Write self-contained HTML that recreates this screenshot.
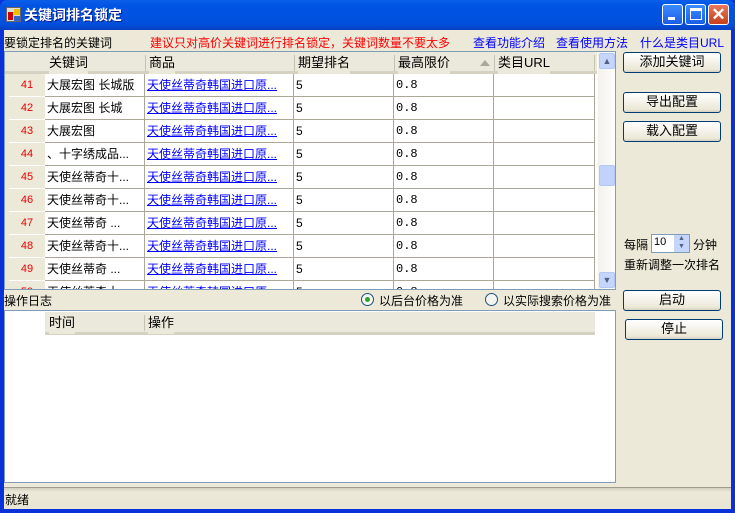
<!DOCTYPE html><html><head><meta charset="utf-8"><style>
*{box-sizing:border-box;margin:0;padding:0}
body{width:735px;height:513px;overflow:hidden;background:#0831d9;font-family:"Liberation Sans","Noto Sans CJK SC",sans-serif;font-size:12px;position:relative}
.a{position:absolute}
#title{left:0;top:0;width:735px;height:30px;background:linear-gradient(#0a5fe8,#0054e3 20%,#0050dd 80%,#0a3fc0);border-radius:7px 7px 0 0}
#client{left:4px;top:30px;width:727px;height:479px;background:#ece9d8}
.tb{top:4px;width:21px;height:21px;border:1px solid #fff;border-radius:3px;background:linear-gradient(#3c8cff,#1a5de6)}
.btn{position:absolute;border:1px solid #003c74;border-radius:3px;background:linear-gradient(#fff,#ece9d8 85%,#d6d0c0);text-align:center;font-size:13px;line-height:18px;color:#000}
.grid{position:absolute;background:#fff;border:1px solid #7f9db9}
.hdr{position:absolute;background:#ebe9db;font-size:13px;height:22px;line-height:22px}
.cell{position:absolute;height:23px;line-height:22px;border-right:1px solid #aca899;border-bottom:1px solid #aca899;font-size:12px;padding-left:2px;white-space:nowrap;overflow:hidden}
.rh{position:absolute;height:23px;line-height:22px;width:36px;text-align:center;color:#e00;background:#ece9d8;font-size:11px;border-bottom:1px solid #fff}
a{color:#00f;text-decoration:underline}
</style></head><body>
<div id="title" class="a"></div>
<div class="a" style="left:6px;top:7px;width:15px;height:15px;background:#ddd;border:1px solid #666"><div class="a" style="left:1px;top:4px;width:5px;height:8px;background:#c00"></div><div class="a" style="left:7px;top:1px;width:6px;height:6px;background:#f0c000"></div><div class="a" style="left:7px;top:8px;width:6px;height:5px;background:#36c"></div></div>
<div class="a" style="left:24px;top:5px;color:#fff;font-weight:bold;font-size:14px;text-shadow:1px 1px #0a1e8a">关键词排名锁定</div>
<div class="a tb" style="left:662px"><div class="a" style="left:5px;top:12px;width:7px;height:3px;background:#fff"></div></div>
<div class="a tb" style="left:685px"><div class="a" style="left:4px;top:3px;width:12px;height:12px;border:1px solid #fff;border-top-width:3px"></div></div>
<div class="a tb" style="left:708px;background:linear-gradient(#e8785a,#c8401a);color:#fff;font-size:17px;font-weight:bold;text-align:center;line-height:19px">✕</div>
<div id="client" class="a"></div>
<div class="a" style="left:4px;top:34px;font-size:12px">要锁定排名的关键词</div>
<div class="a" style="left:150px;top:34px;color:#f00">建议只对高价关键词进行排名锁定，关键词数量不要太多</div>
<div class="a" style="left:473px;top:34px;color:#00f">查看功能介绍</div>
<div class="a" style="left:556px;top:34px;color:#00f">查看使用方法</div>
<div class="a" style="left:640px;top:34px;color:#00f">什么是类目URL</div>

<div class="grid" style="left:4px;top:51px;width:612px;height:239px;overflow:hidden">
<div class="hdr" style="left:0;top:0;width:592px;border-bottom:3px solid #d6d2c2;height:22px"></div>
<div class="hdr" style="left:44px;top:0">关键词</div>
<div class="hdr" style="left:144px;top:0">商品</div>
<div class="hdr" style="left:293px;top:0">期望排名</div>
<div class="hdr" style="left:393px;top:0">最高限价</div>
<div class="a" style="left:475px;top:8px;width:0;height:0;border:5px solid transparent;border-bottom:6px solid #aca899;border-top:0"></div>
<div class="hdr" style="left:493px;top:0">类目URL</div>
<div class="a" style="left:140px;top:3px;width:1px;height:16px;background:#c5c2b2"></div>
<div class="a" style="left:289px;top:3px;width:1px;height:16px;background:#c5c2b2"></div>
<div class="a" style="left:389px;top:3px;width:1px;height:16px;background:#c5c2b2"></div>
<div class="a" style="left:489px;top:3px;width:1px;height:16px;background:#c5c2b2"></div>
<div class="a" style="left:589px;top:3px;width:1px;height:16px;background:#c5c2b2"></div>
<div class="a" style="left:0;top:22px;width:40px;height:220px;background:#ece9d8"></div>
<div id="rows"></div>
<div class="a" style="left:593px;top:0;width:18px;height:238px;background:linear-gradient(90deg,#f3f1ec,#fefefb)"></div>
<div class="a" style="left:594px;top:1px;width:16px;height:16px;border:1px solid #b4c8f6;border-radius:2px;background:#c6d5fb;color:#4d6185;font-size:9px;text-align:center;line-height:14px">▲</div>
<div class="a" style="left:594px;top:220px;width:16px;height:16px;border:1px solid #b4c8f6;border-radius:2px;background:#c6d5fb;color:#4d6185;font-size:9px;text-align:center;line-height:14px">▼</div>
<div class="a" style="left:594px;top:113px;width:16px;height:21px;border:1px solid #b4c8f6;border-radius:2px;background:#c1d3fb"></div>
</div>

<div class="a" style="left:4px;top:292px">操作日志</div>
<div class="a" style="left:361px;top:293px;width:13px;height:13px;border:1px solid #1c5180;border-radius:50%;background:#f4f4f0"><div class="a" style="left:3px;top:3px;width:5px;height:5px;border-radius:50%;background:#2aa52a"></div></div>
<div class="a" style="left:379px;top:292px">以后台价格为准</div>
<div class="a" style="left:485px;top:293px;width:13px;height:13px;border:1px solid #1c5180;border-radius:50%;background:#f4f4f0"></div>
<div class="a" style="left:503px;top:292px">以实际搜索价格为准</div>

<div class="grid" style="left:4px;top:310px;width:612px;height:173px">
<div class="hdr" style="left:40px;top:1px;width:550px;border-bottom:3px solid #d6d2c2;height:23px"></div>
<div class="hdr" style="left:44px;top:1px">时间</div>
<div class="hdr" style="left:143px;top:1px">操作</div>
<div class="a" style="left:139px;top:4px;width:1px;height:16px;background:#c5c2b2"></div>
</div>

<div class="btn" style="left:623px;top:52px;width:98px;height:21px">添加关键词</div>
<div class="btn" style="left:623px;top:92px;width:98px;height:21px">导出配置</div>
<div class="btn" style="left:623px;top:121px;width:98px;height:21px">载入配置</div>
<div class="a" style="left:624px;top:236px">每隔</div>
<div class="a" style="left:651px;top:234px;width:39px;height:19px;border:1px solid #7f9db9;background:#fff;font-size:11px;padding-left:2px;line-height:15px">10</div>
<div class="a" style="left:674px;top:235px;width:15px;height:17px;background:#c6d5fb;color:#4d6185;font-size:7px;text-align:center;line-height:8px">▲<br>▼</div>
<div class="a" style="left:693px;top:236px">分钟</div>
<div class="a" style="left:624px;top:256px">重新调整一次排名</div>
<div class="btn" style="left:623px;top:290px;width:98px;height:21px">启动</div>
<div class="btn" style="left:625px;top:319px;width:98px;height:21px">停止</div>

<div class="a" style="left:4px;top:487px;width:727px;height:22px;background:linear-gradient(#d4d0c0,#ece9d8 20%,#e8e5d4);border-top:1px solid #a09c8c"></div>
<div class="a" style="left:5px;top:491px">就绪</div>
<script>
var kw=["大展宏图 长城版","大展宏图 长城","大展宏图","、十字绣成品...","天使丝蒂奇十...","天使丝蒂奇十...","天使丝蒂奇 ...","天使丝蒂奇十...","天使丝蒂奇 ...","天使丝蒂奇十..."];
var h="";
for(var i=0;i<10;i++){var y=22+i*23;
h+='<div class="rh" style="left:4px;top:'+y+'px">'+(41+i)+'</div>';
h+='<div class="cell" style="left:40px;top:'+y+'px;width:100px">'+kw[i]+'</div>';
h+='<div class="cell" style="left:140px;top:'+y+'px;width:149px"><a>天使丝蒂奇韩国进口原...</a></div>';
h+='<div class="cell" style="left:289px;top:'+y+'px;width:100px">5</div>';
h+='<div class="cell" style="left:389px;top:'+y+'px;width:100px;font-family:Liberation Mono,monospace">0.8</div>';
h+='<div class="cell" style="left:489px;top:'+y+'px;width:101px"></div>';}
document.getElementById("rows").innerHTML=h;
</script>
</body></html>
